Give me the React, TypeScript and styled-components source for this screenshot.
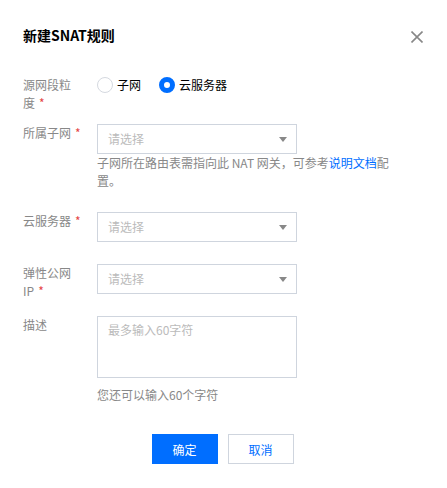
import React from "react";
import styled, { createGlobalStyle } from "styled-components";

const GlobalStyle = createGlobalStyle`
  html, body { margin: 0; padding: 0; background: #fff; }
  body { font-family: "Noto Sans CJK SC", "Noto Sans", sans-serif; }
  * { box-sizing: border-box; }
`;

const Dialog = styled.div`
  width: 447px;
  padding: 25px 24px 24px 23px;
  font-size: 12px;
  color: #000;
`;

const Header = styled.div`
  display: flex;
  justify-content: space-between;
  align-items: flex-start;
  height: 20px;
`;

const Title = styled.h2`
  margin: 0;
  font-size: 14px;
  line-height: 20px;
  font-weight: 700;
  color: #000;
`;

const CloseButton = styled.button`
  margin-top: 6px;
  width: 12px;
  height: 12px;
  padding: 0;
  border: none;
  background: none;
  display: flex;
  cursor: pointer;
`;

const Form = styled.div`
  display: flex;
  flex-direction: column;
`;

const Row = styled.div<{ $top: number }>`
  display: grid;
  grid-template-columns: 58px 300px;
  column-gap: 16px;
  align-items: start;
  margin-top: ${(p) => p.$top}px;
`;

const Label = styled.div`
  font-size: 12px;
  line-height: 18px;
  color: #888;
`;

const Star = styled.span`
  color: #e54545;
  margin-left: 4px;
`;

const RadioGroup = styled.div`
  display: flex;
  align-items: center;
  height: 18px;
`;

const RadioItem = styled.label`
  display: flex;
  align-items: center;
  margin-right: 18px;
  line-height: 18px;
  color: #000;
  cursor: pointer;
`;

const RadioCircle = styled.span<{ $checked?: boolean }>`
  width: 16px;
  height: 16px;
  border-radius: 50%;
  margin-right: 4px;
  background: #fff;
  border: ${(p) => (p.$checked ? "5px solid #006eff" : "1px solid #d5d9e0")};
`;

const Select = styled.div`
  width: 200px;
  height: 30px;
  border: 1px solid #cfd5de;
  padding: 0 9px 0 10px;
  display: flex;
  align-items: center;
  justify-content: space-between;
  background: #fff;
`;

const Placeholder = styled.span`
  color: #bbb;
  line-height: 18px;
`;

const Help = styled.div`
  width: 300px;
  color: #888;
  line-height: 18px;
`;

const Link = styled.a`
  color: #006eff;
  text-decoration: none;
`;

const TextArea = styled.textarea`
  display: block;
  width: 200px;
  height: 62px;
  border: 1px solid #cfd5de;
  padding: 4px 10px;
  margin: 0;
  font-family: inherit;
  font-size: 12px;
  line-height: 18px;
  resize: none;
  outline: none;
  color: #000;
  &::placeholder { color: #bbb; }
`;

const Counter = styled.div`
  margin-top: 8px;
  color: #888;
  line-height: 18px;
`;

const Footer = styled.div`
  margin-top: 30px;
  display: flex;
  justify-content: center;
  gap: 10px;
  padding-right: 1px;
`;

const Button = styled.button<{ $primary?: boolean }>`
  width: 66px;
  height: 30px;
  padding: 0;
  font-family: inherit;
  font-size: 12px;
  cursor: pointer;
  border: 1px solid ${(p) => (p.$primary ? "#006eff" : "#cfd5de")};
  background: ${(p) => (p.$primary ? "#006eff" : "#fff")};
  color: ${(p) => (p.$primary ? "#fff" : "#006eff")};
`;

const Caret = () => (
  <svg width="8" height="5" viewBox="0 0 8 5">
    <path d="M0 0H8L4 5Z" fill="#888" />
  </svg>
);

const SelectBox = ({ text }: { text: string }) => (
  <Select>
    <Placeholder>{text}</Placeholder>
    <Caret />
  </Select>
);

export default function App() {
  return (
    <>
      <GlobalStyle />
      <Dialog>
        <Header>
          <Title>新建SNAT规则</Title>
          <CloseButton aria-label="关闭">
            <svg width="12" height="12" viewBox="0 0 12 12">
              <path d="M0.5 0.5L11.5 11.5M11.5 0.5L0.5 11.5" stroke="#888" strokeWidth="1.6" />
            </svg>
          </CloseButton>
        </Header>
        <Form>
          <Row $top={31}>
            <Label>
              源网段粒度<Star>*</Star>
            </Label>
            <RadioGroup>
              <RadioItem>
                <RadioCircle />
                子网
              </RadioItem>
              <RadioItem>
                <RadioCircle $checked />
                云服务器
              </RadioItem>
            </RadioGroup>
          </Row>
          <Row $top={12}>
            <Label>
              所属子网<Star>*</Star>
            </Label>
            <div>
              <SelectBox text="请选择" />
              <Help>
                子网所在路由表需指向此 NAT 网关，可参考<Link href="#">说明文档</Link>配置。
              </Help>
            </div>
          </Row>
          <Row $top={22}>
            <Label>
              云服务器<Star>*</Star>
            </Label>
            <SelectBox text="请选择" />
          </Row>
          <Row $top={22}>
            <Label>
              弹性公网IP<Star>*</Star>
            </Label>
            <SelectBox text="请选择" />
          </Row>
          <Row $top={16}>
            <Label>描述</Label>
            <div>
              <TextArea placeholder="最多输入60字符" />
              <Counter>您还可以输入60个字符</Counter>
            </div>
          </Row>
        </Form>
        <Footer>
          <Button $primary>确定</Button>
          <Button>取消</Button>
        </Footer>
      </Dialog>
    </>
  );
}
